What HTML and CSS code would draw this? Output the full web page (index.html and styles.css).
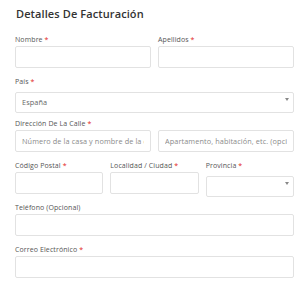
FILE: index.html
```html
<!DOCTYPE html>
<html lang="es">
<head>
    <meta charset="UTF-8">
    <meta name="viewport" content="width=device-width, initial-scale=1.0">
    <title>Detalles De Facturación</title>
    <link rel="stylesheet" href="styles.css">
</head>
<body>
    <div class="billing">
        <h3 class="billing-title">Detalles De Facturación</h3>
        <div class="row two">
            <div class="field">
                <label for="nombre">Nombre <span class="req">*</span></label>
                <input type="text" id="nombre">
            </div>
            <div class="field">
                <label for="apellidos">Apellidos <span class="req">*</span></label>
                <input type="text" id="apellidos">
            </div>
        </div>
        <div class="row">
            <div class="field">
                <label for="pais">País <span class="req">*</span></label>
                <div class="select-wrap">
                    <select id="pais">
                        <option>España</option>
                    </select>
                </div>
            </div>
        </div>
        <div class="row two">
            <div class="field">
                <label for="calle">Dirección De La Calle <span class="req">*</span></label>
                <input type="text" id="calle" placeholder="Número de la casa y nombre de la calle">
            </div>
            <div class="field">
                <label class="blank">&nbsp;</label>
                <input type="text" placeholder="Apartamento, habitación, etc. (opcional)">
            </div>
        </div>
        <div class="row three">
            <div class="field">
                <label for="cp">Código Postal <span class="req">*</span></label>
                <input type="text" id="cp">
            </div>
            <div class="field">
                <label for="ciudad">Localidad / Ciudad <span class="req">*</span></label>
                <input type="text" id="ciudad">
            </div>
            <div class="field">
                <label for="provincia">Provincia <span class="req">*</span></label>
                <div class="select-wrap">
                    <select id="provincia">
                        <option></option>
                    </select>
                </div>
            </div>
        </div>
        <div class="row">
            <div class="field">
                <label for="tel">Teléfono (Opcional)</label>
                <input type="text" id="tel">
            </div>
        </div>
        <div class="row">
            <div class="field">
                <label for="email">Correo Electrónico <span class="req">*</span></label>
                <input type="email" id="email">
            </div>
        </div>
    </div>
</body>
</html>
```

FILE: styles.css
```css
body {
    margin: 0;
    background-color: #fff;
    font-family: "Open Sans", "DejaVu Sans", sans-serif;
    color: #555;
}

.billing {
    padding: 7px 6px 0 15px;
}

.billing-title {
    margin: 0 0 0 1px;
    height: 28px;
    line-height: 14px;
    font-size: 11px;
    font-weight: 600;
    color: #333;
    letter-spacing: 0.1px;
}

.row {
    display: grid;
    grid-template-columns: 1fr;
    column-gap: 7px;
    height: 42px;
}

.row.two {
    grid-template-columns: 1fr 1fr;
}

.row.three {
    grid-template-columns: 1fr 1fr 1fr;
}

.field {
    display: flex;
    flex-direction: column;
    min-width: 0;
}

.field label {
    display: block;
    height: 10px;
    line-height: 10px;
    margin-bottom: 1px;
    font-size: 7px;
    color: #555;
    white-space: nowrap;
    letter-spacing: 0.1px;
}

.req {
    color: #e2231a;
}

.field input,
.field select {
    box-sizing: border-box;
    width: 100%;
    height: 22px;
    margin: 0;
    padding: 0 6px;
    border: 1px solid #e2e2e2;
    border-radius: 2px;
    background-color: #fff;
    font-family: inherit;
    font-size: 7.3px;
    letter-spacing: 0.1px;
    color: #666;
    outline: none;
}

.field input::placeholder {
    color: #8a8a8a;
}

.select-wrap {
    position: relative;
}

.field select {
    -webkit-appearance: none;
    appearance: none;
    height: 21px;
}

.select-wrap::after {
    content: "";
    position: absolute;
    right: 5px;
    top: 10px;
    border-left: 2px solid transparent;
    border-right: 2px solid transparent;
    border-top: 3px solid #888;
    pointer-events: none;
}
```
